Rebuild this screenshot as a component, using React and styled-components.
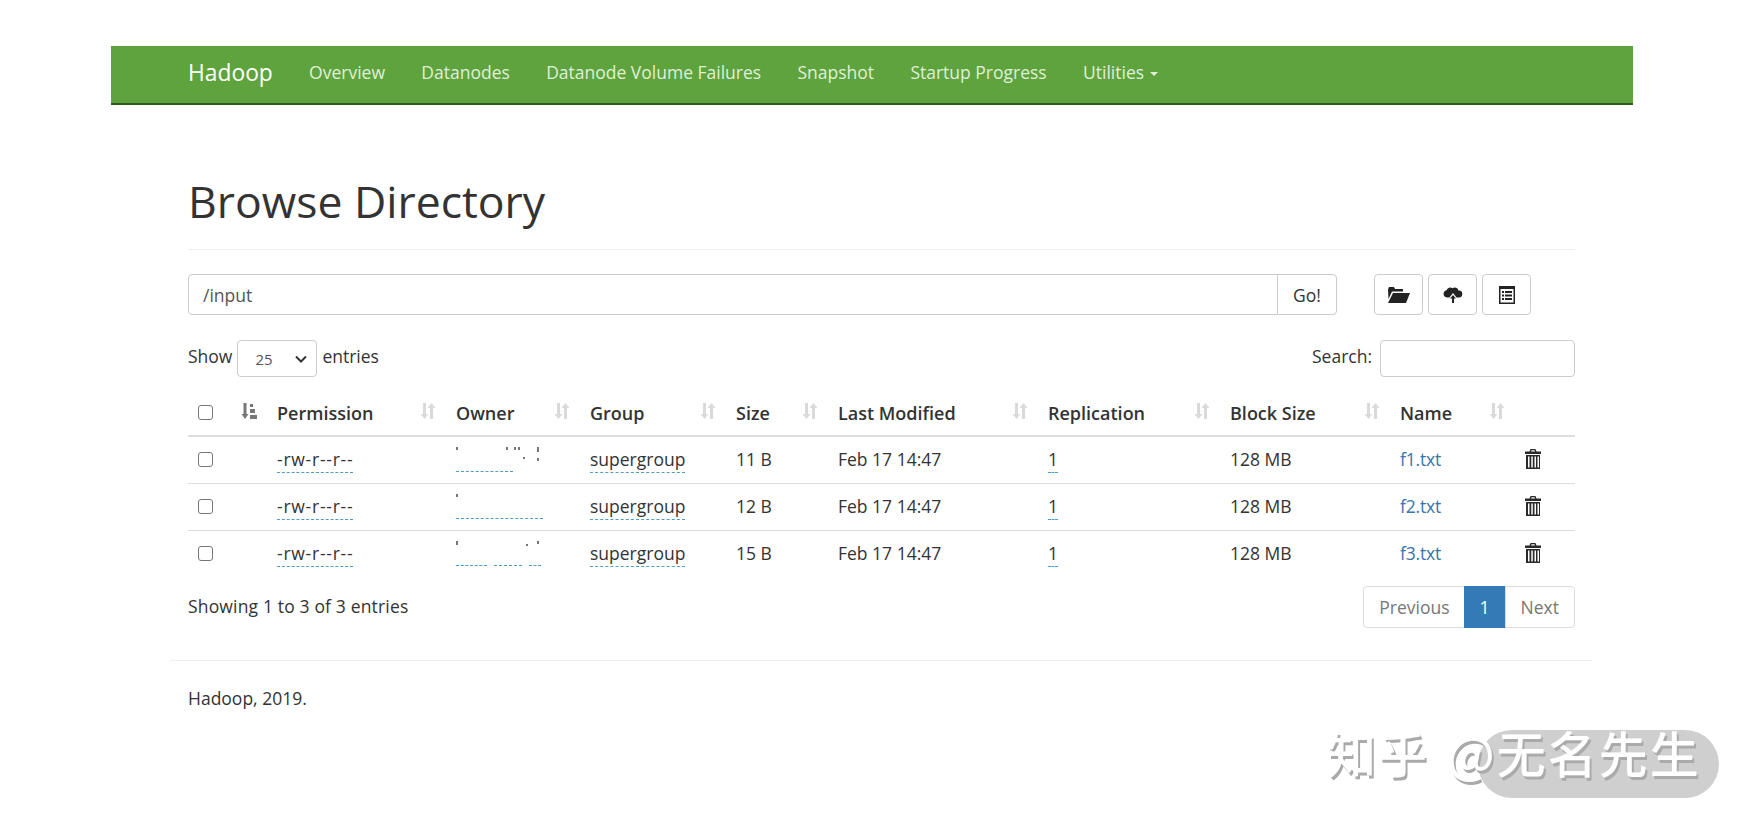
import React from 'react';
import styled, { createGlobalStyle } from 'styled-components';

const GlobalStyle = createGlobalStyle`
  html, body { margin: 0; background: #fff; }
  body {
    font-family: "Open Sans", "Liberation Sans", sans-serif;
    font-size: 17.5px;
    color: #333;
  }
  * { box-sizing: border-box; }
`;

const Page = styled.div`
  width: 1744px;
  height: 822px;
  padding: 46px 111px 0;
  position: relative;
  overflow: hidden;
`;

const NavBar = styled.nav`
  height: 59px;
  background: #5fa33e;
  border-bottom: 2px solid #2f5a1e;
  display: flex;
  align-items: center;
  padding: 0 0 5px 77px;
  gap: 36.3px;
`;

const Brand = styled.span`
  font-size: 22.8px;
  color: #fff;
`;

const NavLink = styled.span`
  font-size: 17.5px;
  color: #dff0d8;
`;

const Caret = styled.span`
  display: inline-block;
  margin-left: 6px;
  vertical-align: middle;
  border-top: 4px solid #dff0d8;
  border-left: 4px solid transparent;
  border-right: 4px solid transparent;
`;

const Container = styled.div`
  width: 1422px;
  padding: 0 17px 0 18px;
  margin-left: 59px;
`;

const Header = styled.div`
  margin-top: 62px;
  padding-bottom: 14px;
  border-bottom: 1px solid #eee;
`;

const Title = styled.h1`
  margin: 0;
  font-size: 44.5px;
  font-weight: 400;
  line-height: 68px;
  color: #333;
`;

const PathRow = styled.div`
  display: flex;
  margin-top: 24px;
`;

const PathInput = styled.div`
  flex: none;
  width: 1090px;
  height: 41px;
  border: 1px solid #ccc;
  border-radius: 4px 0 0 4px;
  padding: 0 14px;
  color: #555;
  display: flex;
  align-items: center;
`;

const GoButton = styled.div`
  width: 60px;
  height: 41px;
  margin-left: -1px;
  border: 1px solid #ccc;
  border-radius: 0 4px 4px 0;
  display: flex;
  align-items: center;
  justify-content: center;
`;

const IconButtons = styled.div`
  display: flex;
  gap: 5px;
  margin-left: 37px;
`;

const IconButton = styled.div`
  width: 49px;
  height: 41px;
  border: 1px solid #ccc;
  border-radius: 4px;
  display: flex;
  align-items: center;
  justify-content: center;
`;

const Controls = styled.div`
  display: flex;
  justify-content: space-between;
  align-items: center;
  margin-top: 25px;
  height: 37px;
`;

const ControlLabel = styled.div`
  display: flex;
  align-items: center;
  gap: 4px;
`;

const ControlText = styled.span`
  padding-bottom: 6px;
`;

const Select = styled.div`
  width: 80px;
  height: 37px;
  border: 1px solid #ccc;
  border-radius: 4px;
  display: flex;
  align-items: center;
  justify-content: space-between;
  padding: 0 9px 0 17px;
  font-size: 15px;
  color: #555;
  margin: 0 1px;
`;

const SearchBox = styled.div`
  width: 195px;
  height: 37px;
  border: 1px solid #ccc;
  border-radius: 4px;
  margin-left: 4px;
`;

const Table = styled.table`
  width: 100%;
  border-collapse: collapse;
  margin-top: 8px;
  table-layout: fixed;

  td, th {
    padding: 0;
    text-align: left;
    font-size: 17.5px;
  }
  th {
    height: 51px;
    padding-top: 5px;
    border-bottom: 2px solid #ddd;
    font-size: 18px;
    font-weight: 600;
    position: relative;
  }
  td {
    height: 47px;
    padding-bottom: 2px;
    border-bottom: 1px solid #ddd;
  }
  tr:last-child td { border-bottom: none; }
`;

const Check = styled.span`
  display: block;
  width: 15px;
  height: 15px;
  margin-left: 10px;
  border: 1px solid #767676;
  border-radius: 3px;
`;

const RowCheck = styled(Check)`
  margin-top: 2px;
`;

const SortSlot = styled.span`
  position: absolute;
  right: ${p => p.$right}px;
  top: 17px;
  display: flex;
`;

const Dotted = styled.span`
  border-bottom: 1px dashed #4f9cc4;
  display: inline-block;
  line-height: 22px;
  margin-top: 3px;
  padding-bottom: 2px;
`;

const Permission = styled(Dotted)`
  letter-spacing: 0.75px;
`;

const OwnerCell = styled.span`
  display: flex;
  position: relative;
  height: 25px;
  margin-top: 2px;
  gap: 7px;
  align-items: flex-end;
`;

const OwnerDash = styled.span`
  width: ${p => p.$width}px;
  border-bottom: 1px dashed #4f9cc4;
`;

const Speck = styled.span`
  position: absolute;
  left: ${p => p.$x}px;
  top: ${p => p.$y}px;
  width: 2px;
  height: ${p => p.$h || 3}px;
  background: #777;
`;

const FileLink = styled.span`
  color: #3a74a8;
  letter-spacing: -0.2px;
`;

const TrashSlot = styled.span`
  display: block;
  svg { display: block; }
`;

const Footer = styled.div`
  display: flex;
  justify-content: space-between;
  align-items: center;
  margin-top: 9px;
`;

const EntryInfo = styled.span`
  letter-spacing: 0.16px;
  padding-bottom: 2px;
`;

const Pagination = styled.div`
  display: flex;
  height: 42px;
`;

const PageItem = styled.div`
  border: 1px solid ${p => (p.$active ? '#337ab7' : '#ddd')};
  background: ${p => (p.$active ? '#337ab7' : '#fff')};
  color: ${p => (p.$active ? '#fff' : '#777')};
  padding: 0 15px;
  display: flex;
  align-items: center;
  margin-left: -1px;
  &:first-child { border-radius: 4px 0 0 4px; padding: 0 14px 0 15px; }
  &:last-child { border-radius: 0 4px 4px 0; }
`;

const Rule = styled.hr`
  width: 1422px;
  margin: 32px 0 0 59px;
  border: none;
  border-top: 1px solid #eee;
`;

const Copyright = styled.p`
  margin: 25px 0 0 77px;
`;

const Pill = styled.div`
  position: absolute;
  left: 1478px;
  top: 730px;
  width: 241px;
  height: 68px;
  background: #cfcfcf;
  border-radius: 34px;
`;

const Watermark = styled.div`
  position: absolute;
  left: 1327px;
  top: 716px;
  font-family: "Noto Sans CJK SC", sans-serif;
  font-size: 49px;
  font-weight: 500;
  line-height: 72px;
  letter-spacing: 2px;
  word-spacing: 5px;
  white-space: nowrap;
  color: #fff;
  text-shadow: 2px 3px 0 #aaa;
`;

const SortIcon = () => (
  <svg width="16" height="18" viewBox="0 0 16 18" fill="#dadada">
    <path d="M3 1h3v11h2.500l-4 5-4-5H3z" />
    <path d="M10 17h3V6h2.500l-4-5-4 5H10z" />
  </svg>
);

const SortActiveIcon = () => (
  <svg width="16" height="18" viewBox="0 0 16 18" fill="#777">
    <path d="M2.500 1h3v11h2l-3.500 5-3.500-5h2z" />
    <rect x="9" y="2" width="3" height="3" />
    <rect x="9" y="7" width="5" height="4" />
    <rect x="9" y="13" width="7" height="4" />
  </svg>
);

const FolderIcon = () => (
  <svg width="23" height="17" viewBox="0 0 23 17" fill="#222">
    <path d="M1 3.500 2 1h5l1 2h8v2.500H5L1.500 13z" />
    <path d="M6 7h17l-4 10H1z" />
  </svg>
);

const CloudUploadIcon = () => (
  <svg width="20" height="17" viewBox="0 0 20 17" fill="#222">
    <path d="M4 11.500A3.700 3.700 0 0 1 3.500 4.200 4 4 0 0 1 9.500 2.200 3.800 3.800 0 0 1 15.500 4.500 3.500 3.500 0 0 1 16 11.500h-2.500L10 7l-3.500 4.500z" />
    <path d="M10 9l3 3.500h-2V17H9v-4.500H7z" />
  </svg>
);

const ListIcon = () => (
  <svg width="16" height="18" viewBox="0 0 16 18">
    <rect width="16" height="18" fill="#222" />
    <rect x="1.500" y="3" width="13" height="13.500" fill="#fff" />
    <g fill="#222">
      <rect x="3" y="5" width="2" height="2" />
      <rect x="6" y="5" width="7" height="2" />
      <rect x="3" y="8.500" width="2" height="2" />
      <rect x="6" y="8.500" width="7" height="2" />
      <rect x="3" y="12" width="2" height="2" />
      <rect x="6" y="12" width="7" height="2" />
    </g>
  </svg>
);

const TrashIcon = () => (
  <svg width="16" height="20" viewBox="0 0 16 20" fill="#2a2a2a">
    <path d="M5.500 0h5l1 2.500H16V5H0V2.500h4.500zM6.500 1.300 6 2.500h4l-.5-1.200z" />
    <path d="M1 6h14v14H1zM3 7.500v11h1.500v-11zM6.300 7.500v11h1.500v-11zM9.500 7.500v11H11v-11zM12.500 7.500v11H14v-11z" fillRule="evenodd" />
  </svg>
);

const Chevron = () => (
  <svg width="12" height="8" viewBox="0 0 12 8" fill="none" stroke="#333" strokeWidth="2">
    <path d="M1 1.500l5 5 5-5" />
  </svg>
);

const rows = [
  {
    size: '11 B',
    name: 'f1.txt',
    dashes: [57],
    specks: [[0, 0], [50, 0], [58, 0], [62, 0], [67, 10, 2], [81, 0], [81, 3, 2], [81, 11]],
  },
  { size: '12 B', name: 'f2.txt', dashes: [87], specks: [[0, 0]] },
  {
    size: '15 B',
    name: 'f3.txt',
    dashes: [31, 28, 12],
    specks: [[0, 0, 4], [70, 3, 2], [81, 0]],
  },
];

const columns = [
  { label: 'Permission', width: 179 },
  { label: 'Owner', width: 134 },
  { label: 'Group', width: 146 },
  { label: 'Size', width: 102 },
  { label: 'Last Modified', width: 210 },
  { label: 'Replication', width: 182 },
  { label: 'Block Size', width: 170 },
  { label: 'Name', width: 125 },
];

const App = () => (
  <Page>
    <GlobalStyle />
    <NavBar>
      <Brand>Hadoop</Brand>
      <NavLink>Overview</NavLink>
      <NavLink>Datanodes</NavLink>
      <NavLink>Datanode Volume Failures</NavLink>
      <NavLink>Snapshot</NavLink>
      <NavLink>Startup Progress</NavLink>
      <NavLink>Utilities<Caret /></NavLink>
    </NavBar>
    <Container>
      <Header><Title>Browse Directory</Title></Header>
      <PathRow>
        <PathInput>/input</PathInput>
        <GoButton>Go!</GoButton>
        <IconButtons>
          <IconButton><FolderIcon /></IconButton>
          <IconButton><CloudUploadIcon /></IconButton>
          <IconButton><ListIcon /></IconButton>
        </IconButtons>
      </PathRow>
      <Controls>
        <ControlLabel>
          <ControlText>Show</ControlText>
          <Select>25 <Chevron /></Select>
          <ControlText>entries</ControlText>
        </ControlLabel>
        <ControlLabel>
          <ControlText>Search:</ControlText>
          <SearchBox />
        </ControlLabel>
      </Controls>
      <Table>
        <colgroup>
          <col style={{ width: 89 }} />
          {columns.map(c => <col key={c.label} style={{ width: c.width }} />)}
          <col />
        </colgroup>
        <thead>
          <tr>
            <th>
              <Check />
              <SortSlot $right={20}><SortActiveIcon /></SortSlot>
            </th>
            {columns.map(c => (
              <th key={c.label}>
                {c.label}
                <SortSlot $right={20}><SortIcon /></SortSlot>
              </th>
            ))}
            <th />
          </tr>
        </thead>
        <tbody>
          {rows.map(r => (
            <tr key={r.name}>
              <td><RowCheck /></td>
              <td><Permission>-rw-r--r--</Permission></td>
              <td>
                <OwnerCell>
                  {r.dashes.map((w, i) => <OwnerDash key={i} $width={w} />)}
                  {r.specks.map(([x, y, h], i) => <Speck key={i} $x={x} $y={y} $h={h} />)}
                </OwnerCell>
              </td>
              <td><Dotted>supergroup</Dotted></td>
              <td>{r.size}</td>
              <td>Feb 17 14:47</td>
              <td><Dotted>1</Dotted></td>
              <td>128 MB</td>
              <td><FileLink>{r.name}</FileLink></td>
              <td><TrashSlot><TrashIcon /></TrashSlot></td>
            </tr>
          ))}
        </tbody>
      </Table>
      <Footer>
        <EntryInfo>Showing 1 to 3 of 3 entries</EntryInfo>
        <Pagination>
          <PageItem>Previous</PageItem>
          <PageItem $active>1</PageItem>
          <PageItem>Next</PageItem>
        </Pagination>
      </Footer>
    </Container>
    <Rule />
    <Copyright>Hadoop, 2019.</Copyright>
    <Pill />
    <Watermark>知乎 @无名先生</Watermark>
  </Page>
);

export default App;
